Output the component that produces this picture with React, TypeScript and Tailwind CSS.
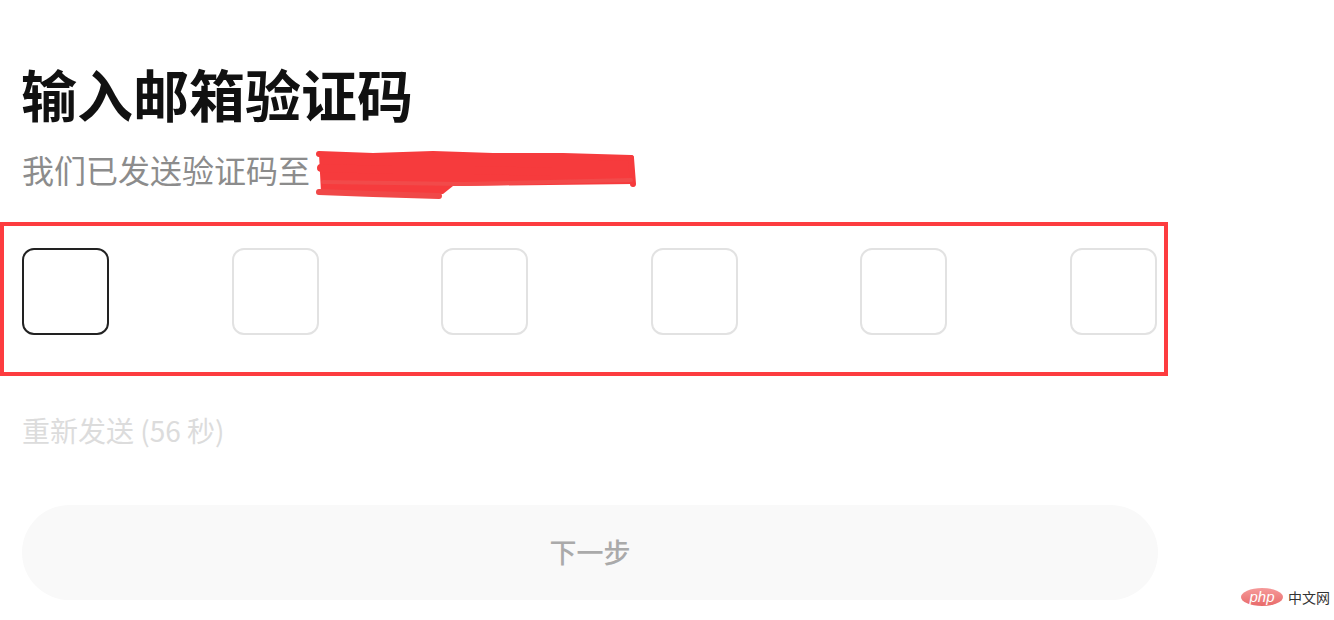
const FONT = { fontFamily: '"Noto Sans CJK SC", "Noto Sans", sans-serif' }

function Scribble() {
  return (
    <svg width="330" height="52" viewBox="0 0 330 52" className="block">
      <path d="M6 6 L120 8 L318 10 L320 36 L140 38 L130 46 L8 44 Z" fill="#f63b3d" />
      <g fill="none" stroke="#f63b3d" strokeLinecap="round" strokeLinejoin="round">
        <path d="M6 6 L60 8 L120 6 L180 8 L250 8 L318 10" strokeWidth="6" />
        <path d="M8 20 L80 22 L160 22 L240 24 L316 24" strokeWidth="8" />
        <path d="M318 10 L320 36" strokeWidth="6" />
        <path d="M6 44 L60 46 L126 48" strokeWidth="6" stroke="#f04848" />
      </g>
      <path d="M10 34 L150 36 L318 32" stroke="#f24a4a" strokeWidth="4" fill="none" strokeLinecap="round" />
    </svg>
  )
}

function PhpLogo() {
  return (
    <div className="flex items-center gap-[5px]">
      <div className="w-[42px] h-[18px] rounded-[50%] bg-gradient-to-b from-[#f59a9a] to-[#e86a6a] flex items-center justify-center">
        <span className="text-white italic text-[15px] leading-none -mt-[2px]" style={{ fontFamily: '"Liberation Sans", sans-serif' }}>php</span>
      </div>
      <span className="text-[#333] text-[14px] leading-none">中文网</span>
    </div>
  )
}

export default function App() {
  const boxes = [0, 1, 2, 3, 4, 5]
  return (
    <div className="w-[1334px] h-[620px] bg-white relative overflow-hidden" style={FONT}>
      <div className="pt-[58px]">
        <h1 className="pl-[21px] text-[56px] leading-[70px] font-bold text-[#111]">输入邮箱验证码</h1>
        <div className="pl-[22px] mt-[12px] flex items-start h-[50px]">
          <span className="mt-[13px] text-[32px] leading-none text-[#8c8c8c]">我们已发送验证码至</span>
          <div className="ml-[3px] mt-[8px]">
            <Scribble />
          </div>
        </div>
        <div className="mt-[32px] w-[1168px] h-[154px] border-4 border-[#fd3c3f] pl-[18px] pt-[22px]">
          <div className="w-[1135px] flex justify-between">
            {boxes.map((i) => (
              <div
                key={i}
                className={`w-[87px] h-[87px] rounded-[12px] border-2 ${
                  i === 0 ? 'border-[#222]' : 'border-[#e2e2e2]'
                }`}
              />
            ))}
          </div>
        </div>
        <div className="pl-[22px] mt-[34px] text-[28px] leading-[40px] text-[#dcdcdc]">重新发送 (56 秒)</div>
        <div className="ml-[22px] mt-[55px] w-[1136px] h-[95px] rounded-full bg-[#f9f9f9] flex items-center justify-center">
          <span className="text-[27px] font-medium text-[#aaaaaa]">下一步</span>
        </div>
      </div>
      <div className="absolute right-[4px] bottom-[14px]">
        <PhpLogo />
      </div>
    </div>
  )
}
